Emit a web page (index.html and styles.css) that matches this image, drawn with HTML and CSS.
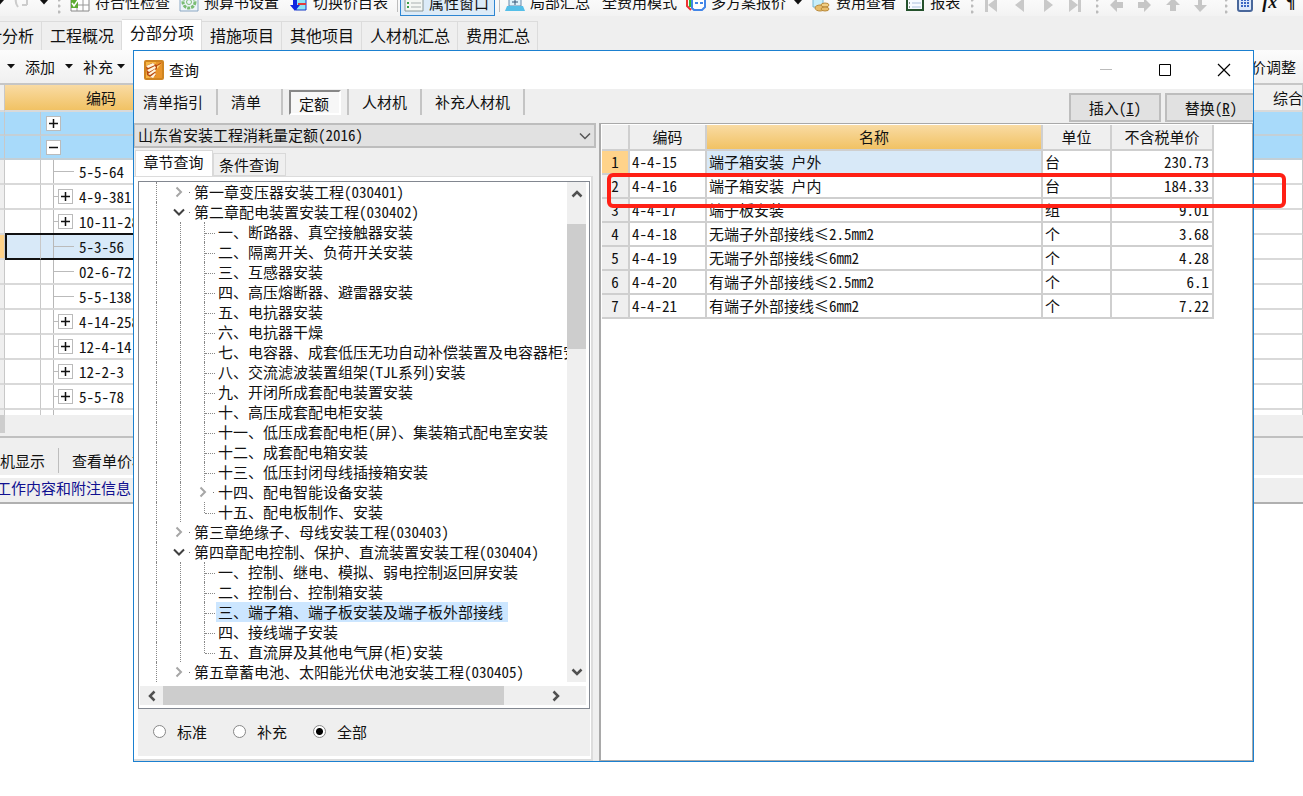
FILE: index.html
```html
<!DOCTYPE html>
<html lang="zh-CN">
<head>
<meta charset="utf-8">
<title>查询</title>
<link rel="stylesheet" href="styles.css">
</head>
<body>
<svg class="defs" aria-hidden="true">
  <symbol id="down" viewBox="0 0 8 5"><path d="M0 0H8L4 4.5Z" fill="#111"/></symbol>
  <symbol id="closed" viewBox="0 0 14 14"><path d="M4.500 2.500L9 7L4.500 11.500" fill="none" stroke="#a6a6a6" stroke-width="2"/></symbol>
  <symbol id="open" viewBox="0 0 14 14"><path d="M2 4.500L7 9.500L12 4.500" fill="none" stroke="#404040" stroke-width="2"/></symbol>
  <symbol id="arrow" viewBox="0 0 14 14"><path d="M2.500 9.500L7 5L11.500 9.500" fill="none" stroke="#505050" stroke-width="2.500"/></symbol>
  <symbol id="plus" viewBox="0 0 13 13"><path d="M2 6.500H11M6.500 2V11" stroke="#111" stroke-width="1.500"/></symbol>
  <symbol id="minus" viewBox="0 0 13 13"><path d="M2 6.500H11" stroke="#111" stroke-width="1.500"/></symbol>
</svg>
<div class="app">
  <header class="toolbar">
    <div class="history">
      <svg width="8" height="5"><use href="#down"/></svg>
      <svg width="18" height="16" viewBox="0 0 18 16"><path d="M6 1Q0 6 5 13M9 11h5M14 6v5" fill="none" stroke="#ccc" stroke-width="2"/></svg>
      <svg width="8" height="5"><use href="#down"/></svg>
    </div>
    <i class="grip"></i>
    <button class="tool"><svg width="20" height="20" viewBox="0 0 20 20"><path d="M1 1H19V19H1Z" fill="#fff" stroke="#888"/><path d="M1 7H19M1 13H19M7 1V19M13 1V19" stroke="#999"/><path d="M1 6H8V16H1Z" fill="#5daa32"/><path d="M2 11l2 3l4-6" fill="none" stroke="#fff" stroke-width="1.500"/></svg>符合性检查</button>
    <button class="tool"><svg width="20" height="20" viewBox="0 0 20 20"><path d="M1 0H19V19H1Z" fill="#edf4fa" stroke="#8ba8c4"/><circle cx="10" cy="10" r="6" fill="none" stroke="#7abc73" stroke-width="3" stroke-dasharray="3 1"/><circle cx="10" cy="10" r="2.500" fill="none" stroke="#7abc73"/></svg>预算书设置</button>
    <button class="tool"><svg width="20" height="20" viewBox="0 0 20 20"><path d="M8 4H18V18H8Z" fill="#8ee5f5" stroke="#1537c4"/><path d="M10 7h8M10 12h8" stroke="#e23a3a" stroke-width="2"/><path d="M5 1V13H2L7 19L12 13H9V1Z" fill="#1028e0"/></svg>切换价目表</button>
    <i class="rule"></i>
    <button class="tool active"><svg width="20" height="20" viewBox="0 0 20 20"><path d="M1 1H19V18H1Z" fill="#f4f7f4" stroke="#8a9696"/><path d="M3 6h2M3 10h2M3 14h2" stroke="#39a04a" stroke-width="2"/><path d="M7 6h10M7 10h10M7 14h10" stroke="#a9b0b0"/></svg>属性窗口</button>
    <i class="rule"></i>
    <button class="tool summary"><svg width="20" height="20" viewBox="0 0 20 20"><path d="M4 1H16V14H4Z" fill="#dff2fb" stroke="#68a"/><path d="M7 6h6M7 10h6M10 3v10" stroke="#357"/><path d="M2 14H18L20 19H0Z" fill="#55bfe8"/></svg>局部汇总</button>
    <button class="tool mode">全费用模式</button>
    <button class="tool"><svg width="20" height="20" viewBox="0 0 20 20"><path d="M1 0V14L5 18" stroke="#e33" stroke-width="2" fill="none"/><path d="M4 0V15" stroke="#3b3" stroke-width="2"/><path d="M6 1H19V15L16 18H8L6 16Z" fill="#fff" stroke="#4386e8" stroke-width="2"/><path d="M9 7h3M14 7h3M9 11h3M14 11h3" stroke="#4386e8" stroke-width="2"/></svg>多方案报价<svg class="more" width="8" height="5"><use href="#down"/></svg></button>
    <button class="tool"><svg width="20" height="20" viewBox="0 0 20 20"><path d="M2 2H12V15H2Z" fill="#c7eefa" stroke="#74b6d4"/><ellipse cx="9" cy="16" rx="5" ry="3" fill="#e8bd6a" stroke="#b98a3c"/><ellipse cx="14" cy="13" rx="4" ry="2" fill="#f1cf85" stroke="#b98a3c"/><ellipse cx="14" cy="17" rx="4" ry="2" fill="#e8bd6a" stroke="#b98a3c"/></svg>费用查看</button>
    <button class="tool"><svg width="20" height="20" viewBox="0 0 20 20"><path d="M2 1H18V18H2Z" fill="#f6fbff" stroke="#24512c" stroke-width="2"/><path d="M7 7h9M7 11h9M7 15h9" stroke="#aac0dd"/><path d="M4 7h1M4 11h1M4 15h1" stroke="#333"/></svg>报表</button>
    <i class="grip"></i>
    <svg class="nav" width="96" height="14" viewBox="0 0 96 14" fill="#c9c9c9"><path d="M0 0H3V14H0ZM12 0V14L3 7ZM39 0V14L30 7ZM59 0V14L68 7ZM84 0V14L93 7ZM93 0H96V14H93Z"/></svg>
    <i class="grip"></i>
    <svg class="nav" width="100" height="14" viewBox="0 0 100 14" fill="#c6c6c6"><path d="M0 7L7 0V4H13V10H7V14ZM41 7L34 0V4H28V10H34V14ZM63 0L70 7H66V13H60V7H56ZM90 14L84 7H88V0H92V7H97Z"/></svg>
    <i class="grip"></i>
    <button class="tool" aria-label="计算器"><svg width="16" height="20" viewBox="0 0 16 20"><rect x="1" y="1" width="14" height="18" rx="2" fill="#dce8fa" stroke="#49679b" stroke-width="2"/><path d="M4 8h2m1 0h2m1 0h2M4 11h2m1 0h2m1 0h2M4 14h2m1 0h2m1 0h2" stroke="#3b67c2" stroke-width="2"/></svg></button>
    <button class="tool formula">fx</button>
    <button class="tool formula">¶</button>
  </header>

  <nav class="tabs">
    <button class="tab first">计分析</button><button class="tab">工程概况</button><button class="tab current">分部分项</button><button class="tab">措施项目</button><button class="tab">其他项目</button><button class="tab">人材机汇总</button><button class="tab">费用汇总</button>
  </nav>

  <div class="actions">
    <svg width="8" height="5"><use href="#down"/></svg>
    <button class="plain">添加</button>
    <svg width="8" height="5"><use href="#down"/></svg>
    <button class="plain supplement">补充<svg width="8" height="5"><use href="#down"/></svg></button>
    <button class="plain adjust">价调整</button>
  </div>

  <table class="sheet">
    <colgroup><col class="c-edge"><col class="c-mark"><col class="c-code"><col><col class="c-total"></colgroup>
    <thead><tr><th></th><th colspan="2" class="amber">编码</th><th></th><th class="total">综合</th></tr></thead>
    <tbody>
      <tr class="blue"><td></td><td></td><td><div class="node root"><span class="box"><svg width="13" height="13"><use href="#plus"/></svg></span></div></td><td></td><td></td></tr>
      <tr class="blue"><td></td><td></td><td><div class="node root"><span class="box"><svg width="13" height="13"><use href="#minus"/></svg></span></div></td><td></td><td></td></tr>
      <tr><td></td><td></td><td><div class="node"><i class="leaf"></i>5-5-64</div></td><td></td><td></td></tr>
      <tr><td></td><td></td><td><div class="node"><i class="stub"></i><span class="box"><svg width="13" height="13"><use href="#plus"/></svg></span>4-9-381</div></td><td></td><td></td></tr>
      <tr><td></td><td></td><td><div class="node"><i class="stub"></i><span class="box"><svg width="13" height="13"><use href="#plus"/></svg></span>10-11-28</div></td><td></td><td></td></tr>
      <tr class="picked"><td></td><td></td><td><div class="node"><i class="leaf"></i>5-3-56</div></td><td></td><td></td></tr>
      <tr><td></td><td></td><td><div class="node"><i class="leaf"></i>02-6-72</div></td><td></td><td></td></tr>
      <tr><td></td><td></td><td><div class="node"><i class="leaf"></i>5-5-138</div></td><td></td><td></td></tr>
      <tr><td></td><td></td><td><div class="node"><i class="stub"></i><span class="box"><svg width="13" height="13"><use href="#plus"/></svg></span>4-14-258</div></td><td></td><td></td></tr>
      <tr><td></td><td></td><td><div class="node"><i class="stub"></i><span class="box"><svg width="13" height="13"><use href="#plus"/></svg></span>12-4-14</div></td><td></td><td></td></tr>
      <tr><td></td><td></td><td><div class="node"><i class="stub"></i><span class="box"><svg width="13" height="13"><use href="#plus"/></svg></span>12-2-3</div></td><td></td><td></td></tr>
      <tr><td></td><td></td><td><div class="node"><i class="stub"></i><span class="box"><svg width="13" height="13"><use href="#plus"/></svg></span>5-5-78</div></td><td></td><td></td></tr>
      <tr class="tail"><td></td><td></td><td><div class="node"></div></td><td></td><td></td></tr>
    </tbody>
  </table>
  <div class="sheet-scroll"><i></i></div>
  <div class="views"><button class="plain">机显示</button><i class="rule"></i><button class="plain">查看单价构成</button></div>
  <div class="notes"><a href="#notes">工作内容和附注信息</a></div>

  <section class="dialog" role="dialog" aria-labelledby="dialog-title">
    <div class="titlebar">
      <svg width="20" height="20" viewBox="0 0 20 20"><rect x="1" y="1" width="18" height="18" rx="1" fill="#f6b544" stroke="#cf8420" stroke-width="2"/><path d="M12 2H18V18H10Z" fill="#e9952a"/><path d="M18 2L11 11L12 15L8 18L3 15L2 6L8 3L13 5Z" fill="#b9480f"/><path d="M17 4L13 9V6Z" fill="#fbd27a"/><path d="M2 6L9 3L11 5L4 8ZM3 10L11 6L12 8L5 12ZM4 14L11 9L12 11L6 15ZM6 17L11 13L12 14L9 18Z" fill="#fff6dc"/></svg>
      <h1 id="dialog-title">查询</h1>
      <button class="win" aria-label="最小化"><svg width="14" height="14" viewBox="0 0 14 14"><path d="M1 6.500H13" stroke="#bbb"/></svg></button>
      <button class="win" aria-label="最大化"><svg width="14" height="14" viewBox="0 0 14 14"><path d="M1.500 1.500H12.500V12.500H1.500Z" fill="none" stroke="#000"/></svg></button>
      <button class="win" aria-label="关闭"><svg width="14" height="14" viewBox="0 0 14 14"><path d="M1 1L13 13M13 1L1 13" stroke="#000" stroke-width="1.200"/></svg></button>
    </div>
    <div class="kinds">
      <button class="kind">清单指引</button><button class="kind list">清单</button><button class="kind quota"><span>定额</span></button><button class="kind">人材机</button><button class="kind">补充人材机</button>
      <div class="commands"><button class="command">插入(<u>I</u>)</button><button class="command">替换(<u>R</u>)</button></div>
    </div>
    <div class="panes">
      <div class="left">
        <div class="library">
          <select aria-label="定额库"><option>山东省安装工程消耗量定额(2016)</option></select>
          <svg width="14" height="14" viewBox="0 0 14 14"><path d="M2 4.500L7 9.500L12 4.500" fill="none" stroke="#555" stroke-width="1.500"/></svg>
        </div>
        <div class="subtabs"><button class="subtab on">章节查询</button><button class="subtab">条件查询</button></div>
        <div class="page">
          <div class="treebox">
            <ul class="tree">
              <li><i class="g near"></i><svg><use href="#closed"/></svg><b></b><span>第一章变压器安装工程(030401)</span></li>
              <li><i class="g near"></i><svg><use href="#open"/></svg><b></b><span>第二章配电装置安装工程(030402)</span></li>
              <li><i class="g"></i><i class="g"></i><i class="g j"></i><span>一、断路器、真空接触器安装</span></li>
              <li><i class="g"></i><i class="g"></i><i class="g j"></i><span>二、隔离开关、负荷开关安装</span></li>
              <li><i class="g"></i><i class="g"></i><i class="g j"></i><span>三、互感器安装</span></li>
              <li><i class="g"></i><i class="g"></i><i class="g j"></i><span>四、高压熔断器、避雷器安装</span></li>
              <li><i class="g"></i><i class="g"></i><i class="g j"></i><span>五、电抗器安装</span></li>
              <li><i class="g"></i><i class="g"></i><i class="g j"></i><span>六、电抗器干燥</span></li>
              <li><i class="g"></i><i class="g"></i><i class="g j"></i><span>七、电容器、成套低压无功自动补偿装置及电容器柜安装</span></li>
              <li><i class="g"></i><i class="g"></i><i class="g j"></i><span>八、交流滤波装置组架(TJL系列)安装</span></li>
              <li><i class="g"></i><i class="g"></i><i class="g j"></i><span>九、开闭所成套配电装置安装</span></li>
              <li><i class="g"></i><i class="g"></i><i class="g j"></i><span>十、高压成套配电柜安装</span></li>
              <li><i class="g"></i><i class="g"></i><i class="g j"></i><span>十一、低压成套配电柜(屏)、集装箱式配电室安装</span></li>
              <li><i class="g"></i><i class="g"></i><i class="g j"></i><span>十二、成套配电箱安装</span></li>
              <li><i class="g"></i><i class="g"></i><i class="g j"></i><span>十三、低压封闭母线插接箱安装</span></li>
              <li><i class="g"></i><i class="g near"></i><svg><use href="#closed"/></svg><b></b><span>十四、配电智能设备安装</span></li>
              <li><i class="g"></i><i class="g"></i><i class="g j end"></i><span>十五、配电板制作、安装</span></li>
              <li><i class="g near"></i><svg><use href="#closed"/></svg><b></b><span>第三章绝缘子、母线安装工程(030403)</span></li>
              <li><i class="g near"></i><svg><use href="#open"/></svg><b></b><span>第四章配电控制、保护、直流装置安装工程(030404)</span></li>
              <li><i class="g"></i><i class="g"></i><i class="g j"></i><span>一、控制、继电、模拟、弱电控制返回屏安装</span></li>
              <li><i class="g"></i><i class="g"></i><i class="g j"></i><span>二、控制台、控制箱安装</span></li>
              <li><i class="g"></i><i class="g"></i><i class="g j"></i><span class="chosen">三、端子箱、端子板安装及端子板外部接线</span></li>
              <li><i class="g"></i><i class="g"></i><i class="g j"></i><span>四、接线端子安装</span></li>
              <li><i class="g"></i><i class="g"></i><i class="g j end"></i><span>五、直流屏及其他电气屏(柜)安装</span></li>
              <li><i class="g near"></i><svg><use href="#closed"/></svg><b></b><span>第五章蓄电池、太阳能光伏电池安装工程(030405)</span></li>
            </ul>
            <div class="vbar"><svg><use href="#arrow"/></svg><i></i><svg class="turn-down"><use href="#arrow"/></svg></div>
            <div class="hbar"><svg class="turn-left"><use href="#arrow"/></svg><i></i><svg class="turn-right"><use href="#arrow"/></svg></div>
          </div>
          <div class="scope">
            <label><input type="radio" name="scope">标准</label>
            <label><input type="radio" name="scope">补充</label>
            <label><input type="radio" name="scope" checked>全部</label>
          </div>
        </div>
      </div>
      <div class="right">
        <table class="results">
          <colgroup><col class="r-num"><col class="r-code"><col><col class="r-unit"><col class="r-price"></colgroup>
          <thead><tr><th></th><th>编码</th><th class="amber">名称</th><th>单位</th><th>不含税单价</th></tr></thead>
          <tbody>
            <tr class="now"><th>1</th><td>4-4-15</td><td>端子箱安装 户外</td><td>台</td><td>230.73</td></tr>
            <tr><th>2</th><td>4-4-16</td><td>端子箱安装 户内</td><td>台</td><td>184.33</td></tr>
            <tr><th>3</th><td>4-4-17</td><td>端子板安装</td><td>组</td><td>9.01</td></tr>
            <tr><th>4</th><td>4-4-18</td><td>无端子外部接线≤2.5mm2</td><td>个</td><td>3.68</td></tr>
            <tr><th>5</th><td>4-4-19</td><td>无端子外部接线≤6mm2</td><td>个</td><td>4.28</td></tr>
            <tr><th>6</th><td>4-4-20</td><td>有端子外部接线≤2.5mm2</td><td>个</td><td>6.1</td></tr>
            <tr><th>7</th><td>4-4-21</td><td>有端子外部接线≤6mm2</td><td>个</td><td>7.22</td></tr>
          </tbody>
        </table>
      </div>
    </div>
  </section>
  <div class="marker"></div>
</div>
</body>
</html>
```

FILE: styles.css
```css
* { box-sizing: border-box; }
body {
  margin: 0;
  background: #fff;
  color: #111;
  font: 15px/20px "Noto Sans CJK SC", sans-serif;
  font-feature-settings: "hwid";
}
button { margin: 0; padding: 0; border: 0; background: none; color: inherit; font: inherit; font-feature-settings: inherit; white-space: nowrap; }
svg { flex: none; display: block; }
.defs { position: absolute; width: 0; height: 0; }
.app { position: relative; min-height: 100vh; overflow: hidden; }

.toolbar { display: flex; align-items: flex-end; gap: 9px; height: 16px; padding-bottom: 4px; overflow: hidden; background: linear-gradient(#fafafa, #f3f3f3); }
.history { display: flex; align-items: center; gap: 9px; height: 20px; width: 51px; margin-left: -4px; }
.tool { flex: none; display: flex; align-items: center; gap: 5px; height: 20px; }
.tool.active { height: 40px; margin: 0 -5px -4px -7px; padding: 14px 5px 0 3px; border: 1px solid #2e86d2; background: #dcebf8; }
.summary { margin-left: -4px; }
.mode { margin-left: 3px; }
.more { margin-left: 3px; }
.grip { flex: none; width: 3px; height: 16px; margin: 0 0 -2px 2px; background: radial-gradient(circle at 1px 2px, #bbb 1px, transparent 2px) 0 0 / 3px 6px; }
.rule { flex: none; width: 1px; height: 20px; background: #bdbdbd; }
.nav { margin: 0 4px 0 2px; }
.formula { font: italic bold 18px/20px "Liberation Serif", serif; }

.tabs { display: flex; align-items: flex-end; height: 34px; padding-top: 4px; background: #efefef; font-size: 16px; }
.tab { height: 29px; padding: 0 7px 2px 8px; border: 1px solid #dcdcdc; border-width: 1px 1px 0 0; }
.tab.first { width: 42px; direction: rtl; overflow: hidden; }
.tab.current { height: 31px; padding-bottom: 6px; background: #fff; }

.actions { display: flex; align-items: center; gap: 10px; height: 35px; padding: 0 7px; border-bottom: 2px solid #c6c6c6; background: linear-gradient(#fcfcfc, #f0f0f0); }
.supplement { display: flex; align-items: center; gap: 4px; }
.adjust { margin-left: auto; }

.sheet { width: 100%; border-collapse: separate; border-spacing: 0; table-layout: fixed; }
.sheet th, .sheet td { height: 25px; padding: 0; border-bottom: 2px solid #d9d9d9; border-right: 1px solid #c8c8c8; font-weight: normal; white-space: nowrap; overflow: hidden; }
.sheet th { height: 27px; background: #f0f0f0; }
.sheet tr > :first-child { background: #efefef; }
.sheet .total { padding-left: 20px; text-align: left; }
.sheet .amber, .results .amber { background: linear-gradient(#f9dba3, #f1c264); }
.c-edge { width: 5px; } .c-mark { width: 36px; } .c-code { width: 157px; } .c-total { width: 50px; }
.sheet .blue td { height: 24px; background: #a8dafa; border-bottom-color: #c3cfd6; }
.node { display: flex; align-items: center; height: 23px; margin-left: 12px; border-left: 1px solid #b8b8b8; }
.node.root { height: 22px; margin-left: 5px; border: 0; }
.box { display: block; width: 15px; height: 15px; margin-right: 6px; border: 1px solid #bbb; background: #fff; }
.stub { width: 4px; height: 1px; background: #bbb; }
.leaf { width: 20px; height: 1px; margin-right: 5px; background: #bbb; }
.picked td:nth-child(2), .picked td:nth-child(3) { background: #d8e9f8; border-bottom: 2px solid #111; box-shadow: 0 -2px #111; }
.picked td:nth-child(2) { border-left: 2px solid #111; }
.picked td:first-child { background: #ffd38a; }
.sheet .tail td { height: 5px; border-bottom: 0; }
.tail .node { height: 5px; }
.sheet-scroll { height: 23px; border-bottom: 2px solid #c0c0c0; background: #efefef; }
.sheet-scroll i { display: block; width: 5px; height: 18px; background: #cdcdcd; }
.views { display: flex; align-items: center; gap: 13px; height: 37px; padding-top: 8px; background: #efefef; }
.views .rule { height: 25px; }
.notes { height: 29px; border-top: 3px solid #fff; border-bottom: 2px solid #b0b0b0; background: #efefef; overflow: hidden; }
.notes a { margin-left: -4px; color: #101090; text-decoration: none; }

.dialog { position: absolute; top: 50px; left: 133px; right: 49px; border: 1px solid #1b80d0; background: #efefef; overflow: hidden; }
.titlebar { display: flex; align-items: center; height: 38px; padding-left: 10px; background: #fff; }
.titlebar h1 { flex: 1; margin: 0 0 0 5px; font-size: 15px; font-weight: normal; }
.win { display: grid; place-items: center; width: 59px; height: 36px; }
.kinds { display: flex; height: 34px; }
.kind { height: 26px; padding: 0 13px 1px; border-right: 2px solid #c4c4c4; }
.kind:first-child { padding-left: 9px; }
.kind.list { padding-right: 20px; }
.kind.quota { padding: 0 6px; }
.quota span { display: block; width: 52px; height: 25px; padding-top: 2px; border: 2px solid; border-color: #888 #fff #fff #888; background: #f7f7f7; text-indent: -2px; }
.commands { display: flex; gap: 4px; margin: 4px -4px 0 auto; }
.command { width: 92px; height: 29px; border: 2px solid #bdbdbd; background: #e1e1e1; }

.panes { display: grid; grid-template-columns: 462px minmax(0, 1fr); gap: 3px; }
.library { position: relative; }
.library select { display: block; appearance: none; width: 100%; height: 25px; padding: 0 3px 2px; border: 2px solid #bdbdbd; border-left-width: 1px; border-radius: 0; background: #e1e1e1; color: inherit; font: inherit; font-feature-settings: inherit; }
.library svg { position: absolute; right: 4px; top: 6px; pointer-events: none; }
.subtabs { display: flex; align-items: flex-end; height: 28px; padding-left: 1px; }
.subtab { height: 23px; padding: 0 6px 0 5px; border: 1px solid #d9d9d9; }
.subtab.on { height: 26px; width: 78px; padding-bottom: 3px; border-bottom: 0; background: #fff; }
.page { margin-right: 3px; padding: 4px 1px 3px 4px; border: 1px solid #dcdcdc; border-width: 1px 2px 2px 0; background: #fff; }
.treebox { display: grid; grid-template-columns: minmax(0, 1fr) 19px; grid-template-rows: auto 19px; row-gap: 4px; padding: 0 3px 3px 1px; border: 1px solid #828790; background: #fff; }
.tree { margin: 0; padding: 0 0 0 16px; list-style: none; overflow: hidden; }
.tree li { display: flex; align-items: center; height: 20px; white-space: nowrap; }
.g { flex: none; align-self: stretch; width: 24px; border-left: 1px dotted #888; }
.g.near { width: 16px; }
.g.j { width: 12px; }
.g.j::before { content: ""; display: block; width: 10px; height: 11px; border-bottom: 1px dotted #888; }
.g.j.end { height: 11px; align-self: flex-start; }
.tree svg, .vbar svg, .hbar svg { width: 14px; height: 14px; }
.tree b { width: 1px; height: 1px; margin: 0 2px 0 3px; background: #777; }
.tree span { padding: 0 2px; }
.tree .chosen { padding-right: 5px; background: #cce6ff; }
.vbar { display: flex; flex-direction: column; align-items: center; padding: 5px 0 3px; background: #efefef; }
.vbar i { width: 19px; height: 125px; margin: 23px 0 auto; background: #cdcdcd; }
.hbar { grid-column: 1 / -1; display: flex; align-items: center; padding-left: 5px; background: #efefef; }
.hbar i { flex: 0 1 341px; margin: 0 auto 0 4px; align-self: stretch; background: #cdcdcd; }
.hbar .turn-right { margin-right: 23px; }
.turn-down { transform: rotate(180deg); }
.turn-left { transform: rotate(-90deg); }
.turn-right { transform: rotate(90deg); }
.scope { display: flex; gap: 26px; height: 47px; padding: 0 0 2px 15px; background: #efefef; }
.scope label { display: flex; align-items: center; gap: 11px; }
.scope input { appearance: none; width: 13px; height: 13px; margin: 0; border: 1px solid #888; border-radius: 50%; background: #fff; }
.scope input:checked { background: radial-gradient(circle, #000 3px, #fff 4px); }

.right { padding: 1px 38px 0 1px; border: 1px solid #a9a9a9; border-left-width: 2px; background: #fff; }
.results { width: 100%; border-collapse: separate; border-spacing: 0; table-layout: fixed; }
.results th, .results td { height: 24px; padding: 0 2px; border: 1px solid #cfcfcf; border-width: 0 2px 2px 0; font-weight: normal; line-height: 20px; white-space: nowrap; }
.results th { background: #efefef; }
.results thead th { height: 26px; }
.results td:last-child { padding-right: 3px; text-align: right; }
.r-num { width: 28px; } .r-code { width: 77px; } .r-unit { width: 69px; } .r-price { width: 102px; }
.results .now th { background: #ffd38a; }
.results .now td:nth-child(3) { background: #d8e9f8; }

.marker { position: absolute; top: 173px; left: 607px; right: 17px; height: 35px; border: 4px solid #ff2015; border-radius: 6px; pointer-events: none; }
```
